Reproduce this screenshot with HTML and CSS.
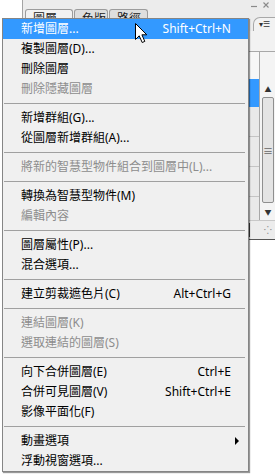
FILE: index.html
```html
<!DOCTYPE html>
<html lang="zh-Hant">
<head>
    <meta charset="UTF-8">
    <link rel="stylesheet" href="styles.css">
    <title>圖層選單</title>
</head>
<body>
<div class="panel">
    <div class="panel-top">
        <svg class="win-btn" width="8" height="9" viewBox="0 0 8 9"><path d="M1 6.5 H7" stroke="#8a8a8a" stroke-width="1.2"/></svg>
        <svg class="win-btn" width="8" height="9" viewBox="0 0 8 9"><path d="M1.5 2.5 L6.5 7.5 M6.5 2.5 L1.5 7.5" stroke="#8a8a8a" stroke-width="1.1"/></svg>
    </div>
    <div class="tabbar">
        <div class="tab active tab-layers">圖層 <span class="tab-arrow">▾</span></div>
        <div class="tab tab-channels">色版</div>
        <div class="tab tab-paths">路徑</div>
        <div class="panel-menu-btn">▾☰</div>
    </div>
    <div class="options"></div>
    <div class="layers">
        <div class="layer-list">
            <div class="layer-row first"></div>
            <div class="layer-row selected"></div>
            <div class="layer-row"></div>
            <div class="layer-row"></div>
            <div class="layer-row"></div>
        </div>
        <div class="scrollbar">
            <div class="scroll-btn up">▲</div>
            <div class="scroll-thumb"><span class="thumb-grip">≡</span></div>
            <div class="scroll-btn down">▼</div>
        </div>
    </div>
    <div class="panel-bottom">
        <span class="bottom-tick"></span>
        <span class="grip">⁘</span>
    </div>
</div>

<div class="menu">
    <div class="item hover"><span>新增圖層...</span><span class="key">Shift+Ctrl+N</span></div>
    <div class="item"><span>複製圖層(D)...</span></div>
    <div class="item"><span>刪除圖層</span></div>
    <div class="item disabled"><span>刪除隱藏圖層</span></div>
    <div class="sep"></div>
    <div class="item"><span>新增群組(G)...</span></div>
    <div class="item"><span>從圖層新增群組(A)...</span></div>
    <div class="sep"></div>
    <div class="item disabled"><span>將新的智慧型物件組合到圖層中(L)...</span></div>
    <div class="sep"></div>
    <div class="item"><span>轉換為智慧型物件(M)</span></div>
    <div class="item disabled"><span>編輯內容</span></div>
    <div class="sep"></div>
    <div class="item"><span>圖層屬性(P)...</span></div>
    <div class="item"><span>混合選項...</span></div>
    <div class="sep"></div>
    <div class="item"><span>建立剪裁遮色片(C)</span><span class="key">Alt+Ctrl+G</span></div>
    <div class="sep"></div>
    <div class="item disabled"><span>連結圖層(K)</span></div>
    <div class="item disabled"><span>選取連結的圖層(S)</span></div>
    <div class="sep"></div>
    <div class="item"><span>向下合併圖層(E)</span><span class="key">Ctrl+E</span></div>
    <div class="item"><span>合併可見圖層(V)</span><span class="key">Shift+Ctrl+E</span></div>
    <div class="item"><span>影像平面化(F)</span></div>
    <div class="sep"></div>
    <div class="item has-sub"><span>動畫選項</span><span class="sub-arrow"></span></div>
    <div class="item"><span>浮動視窗選項...</span></div>
</div>

<svg class="cursor" width="14" height="22" viewBox="0 0 14 22">
    <path d="M1.5 1.5 V17.5 L5.2 13.8 L8.2 20.5 L10.8 19.4 L7.9 12.8 L12.8 12.8 Z" fill="#fff" stroke="#000" stroke-width="1" stroke-linejoin="miter"/>
</svg>
</body>
</html>
```

FILE: styles.css
```css
* {
    box-sizing: border-box;
}
body {
    margin: 0;
    width: 275px;
    height: 475px;
    overflow: hidden;
    position: relative;
    background: #fff;
    font-family: "Noto Sans", "Noto Sans CJK TC", sans-serif;
}

/* layers panel behind the menu */
.panel {
    margin-left: 22px;
    height: 240px;
    background: #ececec;
    border-left: 1px solid #a4a4a4;
    border-bottom: 1px solid #555;
    display: flex;
    flex-direction: column;
}
.panel-top {
    height: 9px;
    display: flex;
    justify-content: flex-end;
    align-items: flex-start;
    gap: 4px;
    padding-right: 5px;
}
.win-btn {
    display: block;
}
.tabbar {
    height: 22px;
    display: flex;
    align-items: flex-start;
    padding-left: 2px;
}
.tab {
    height: 22px;
    border: 1px solid #9c9c9c;
    border-bottom: none;
    border-radius: 3px 3px 0 0;
    padding: 1px 0 0 7px;
    margin-right: 1px;
    font-size: 12px;
    line-height: 16px;
    color: #222;
    background: #dedede;
}
.tab.active {
    background: #f2f2f2;
}
.tab-layers {
    width: 48px;
}
.tab-channels {
    width: 34px;
}
.tab-paths {
    width: 39px;
}
.tab-arrow {
    font-size: 9px;
}
.panel-menu-btn {
    margin-left: auto;
    margin-top: 8px;
    width: 22px;
    height: 14px;
    border-top: 1px solid #a8a8a8;
    border-left: 1px solid #a8a8a8;
    border-top-left-radius: 7px;
    padding-left: 5px;
    font-size: 8px;
    line-height: 11px;
    color: #333;
    background: #f2f2f2;
}
.options {
    height: 21px;
    background: #f2f2f2;
    border-bottom: 1px solid #a8a8a8;
}
.layers {
    flex: 1;
    display: flex;
}
.layer-list {
    flex: 1;
    background: #e9e9e9;
}
.layer-row {
    height: 30px;
    border-bottom: 1px solid #c4c4c4;
}
.layer-row.first {
    height: 27px;
    background: #f7f7f7;
    border-bottom: none;
}
.layer-row.selected {
    height: 28px;
    background: #3399ff;
    border-bottom: none;
}
.scrollbar {
    width: 16px;
    border-left: 1px solid #a8a8a8;
    background: #f4f4f4;
    display: flex;
    flex-direction: column;
    padding: 30px 1px 0 2px;
}
.scroll-btn {
    height: 15px;
    font-size: 7px;
    line-height: 15px;
    text-align: center;
    color: #333;
}
.scroll-thumb {
    flex: 1;
    border: 1px solid #8f8f8f;
    border-radius: 2px;
    background: #e4e4e4;
    display: flex;
    align-items: center;
    justify-content: center;
    font-size: 10px;
    color: #666;
    margin-bottom: 2px;
}
.panel-bottom {
    height: 19px;
    border-top: 1px solid #c8c8c8;
    display: flex;
    align-items: center;
    justify-content: flex-end;
    padding-right: 3px;
}
.bottom-tick {
    width: 1px;
    height: 14px;
    background: #444;
    margin-right: 14px;
}
.grip {
    font-size: 10px;
    color: #888;
}

/* context menu */
.menu {
    position: absolute;
    left: 2px;
    top: 18px;
    width: 247px;
    background: #f0f0f0;
    border: 1px solid #858585;
    box-shadow: 1px 1px 1px rgba(0, 0, 0, 0.4);
    font-size: 12px;
    color: #000;
}
.item {
    height: 20px;
    line-height: 20px;
    display: flex;
    justify-content: space-between;
    align-items: center;
    padding: 0 17px 0 18px;
    white-space: nowrap;
}
.item.hover {
    background: #3399ff;
    color: #fff;
}
.item.disabled {
    color: #8d8d8d;
}
.item.has-sub {
    padding-right: 9px;
}
.sub-arrow {
    width: 0;
    height: 0;
    border-left: 4px solid #000;
    border-top: 4px solid transparent;
    border-bottom: 4px solid transparent;
}
.sep {
    height: 9px;
    padding: 4px 3px 0 1px;
}
.sep::before {
    content: "";
    display: block;
    height: 1px;
    background: #a0a0a0;
}

.cursor {
    position: absolute;
    left: 134px;
    top: 22px;
}
```
